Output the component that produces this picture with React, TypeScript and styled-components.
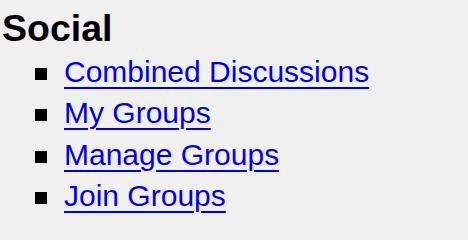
import styled, { createGlobalStyle } from 'styled-components';

const GlobalStyle = createGlobalStyle`
  html, body {
    margin: 0;
    padding: 0;
    background: #f0f0f0;
  }
  body {
    font-family: "Liberation Sans", Arial, sans-serif;
    color: #000000;
  }
`;

const StyledPage = styled.div`
  padding: 5px 0 0 2px;
`;

const StyledTitle = styled.h3`
  margin: 0;
  font-size: 37.5px;
  font-weight: bold;
  line-height: 46px;
`;

const StyledList = styled.ul`
  list-style: none;
  margin: 0;
  padding: 0 0 0 33px;
  display: flex;
  flex-direction: column;
`;

const StyledItem = styled.li`
  display: flex;
  align-items: center;
  gap: 17px;
  height: 41.5px;
  font-size: 30px;

  &::before {
    content: '';
    width: 12px;
    height: 12px;
    background: #000000;
    flex: 0 0 auto;
    margin-top: 4px;
  }
`;

const StyledLink = styled.a`
  color: #0000ee;
  text-decoration: underline;
  text-decoration-thickness: 2px;
  text-underline-offset: 5px;
`;

const links = ['Combined Discussions', 'My Groups', 'Manage Groups', 'Join Groups'];

export default function App() {
  return (
    <StyledPage>
      <GlobalStyle />
      <StyledTitle>Social</StyledTitle>
      <StyledList>
        {links.map((label) => (
          <StyledItem key={label}>
            <StyledLink href="#">{label}</StyledLink>
          </StyledItem>
        ))}
      </StyledList>
    </StyledPage>
  );
}
